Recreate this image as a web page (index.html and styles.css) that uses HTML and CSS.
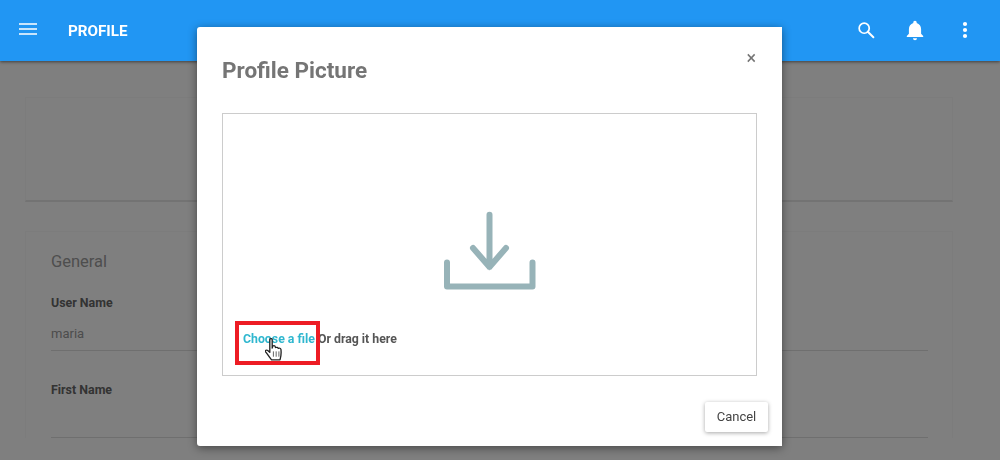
FILE: index.html
```html
<!DOCTYPE html>
<html lang="en">
<head>
    <meta charset="UTF-8">
    <title>Profile</title>
    <link rel="stylesheet" href="styles.css">
</head>
<body>
  <div class="header">
    <button class="icon-btn menu-btn" aria-label="Menu">
      <svg width="18" height="12" viewBox="0 0 18 12"><path d="M0 1h18M0 6h18M0 11h18" stroke="#fff" stroke-width="1.6"/></svg>
    </button>
    <h1 class="page-title">PROFILE</h1>
    <div class="header-actions">
      <svg class="icon" width="18" height="18" viewBox="0 0 20 20" aria-label="Search"><circle cx="8" cy="8" r="5.6" fill="none" stroke="#fff" stroke-width="1.9"/><path d="M12 12l6.2 6" stroke="#fff" stroke-width="2.2" stroke-linecap="round"/></svg>
      <svg class="icon" width="18" height="21" viewBox="0 0 18 21" aria-label="Notifications"><path d="M9 .8c1 0 1.7.8 1.7 1.8v.4c2.7.8 4.4 3.2 4.4 6.2v4.6L17.2 16v1H.8v-1l2.1-2.200V9.200c0-3 1.700-5.400 4.400-6.200v-.4C7.300 1.600 8 .8 9 .8z" fill="#fff"/><path d="M7 18.300h4c0 1.200-.9 2-2 2s-2-.8-2-2z" fill="#fff"/></svg>
      <svg class="icon more" width="6" height="18" viewBox="0 0 6 18" aria-label="More"><circle cx="3" cy="3" r="2.100" fill="#fff"/><circle cx="3" cy="9" r="2.100" fill="#fff"/><circle cx="3" cy="15" r="2.100" fill="#fff"/></svg>
    </div>
  </div>

  <div class="content">
    <div class="card top-card"></div>
    <div class="card">
      <h2 class="card-title">General</h2>
      <div class="field">
        <label>User Name</label>
        <div class="field-value">maria</div>
      </div>
      <div class="field">
        <label>First Name</label>
        <div class="field-value"></div>
      </div>
    </div>
  </div>

  <div class="backdrop"></div>

  <div class="dialog">
    <div class="dialog-head">
      <h3>Profile Picture</h3>
      <span class="close">&times;</span>
    </div>
    <div class="dropzone">
      <svg class="upload-icon" width="92" height="80" viewBox="0 0 92 80"><path d="M45.500 3.800V56M29 37l16.500 19L62 37M3 51.500V75.500h85.500V51.500" fill="none" stroke="#97b3b8" stroke-width="6" stroke-linecap="round" stroke-linejoin="round"/></svg>
      <p class="drop-text"><a class="file-link">Choose a file</a> Or drag it here</p>
      <div class="highlight"></div>
      <svg class="hand-cursor" width="18" height="23" viewBox="1 0.500 15 21.500" preserveAspectRatio="none"><path d="M5 2c0-1.300 2-1.300 2 0v8l.5-2c1-.6 2-.3 2 .8l.3.700c.9-.6 2-.3 2.200.8.900-.6 2.200-.2 2.300 1 .3 3 .2 6-.8 9.700H6.500C5 19 3 15.500 1.500 13.500c-.7-1.200.8-2.300 1.800-1.300L5 14V2z" fill="#fff" stroke="#222" stroke-width="1.100" stroke-linejoin="round"/><path d="M8 13v5M10.300 13v5M12.600 13v5" stroke="#555" stroke-width=".8"/></svg>
    </div>
    <div class="dialog-foot">
      <button class="cancel-btn">Cancel</button>
    </div>
  </div>
</body>
</html>
```

FILE: styles.css
```css
body {
  margin: 0;
  height: 460px;
  overflow: hidden;
  font-family: Roboto, sans-serif;
  background-color: #fff;
}

.header {
  position: relative;
  z-index: 2;
  display: flex;
  align-items: center;
  height: 61px;
  padding: 0 32px 0 19px;
  background-color: #2196f3;
  box-shadow: 0 1px 3px rgba(0, 0, 0, 0.5);
  color: #fff;
}

.icon-btn {
  display: flex;
  padding: 0;
  border: none;
  background: none;
  margin-top: -4px;
}

.page-title {
  margin: 0 0 0 31px;
  font-size: 15.2px;
  font-weight: 700;
}

.header-actions {
  display: flex;
  align-items: center;
  gap: 31px;
  margin-left: auto;
  margin-top: -1px;
}

.more {
  margin-left: 7px;
}

.content {
  padding: 36px 47px 0 25px;
}

.card {
  padding: 18px 24px 0 25px;
  border: 1px solid #f8f8f8;
  border-bottom: none;
}

.top-card {
  height: 102px;
  margin-bottom: 29px;
  padding: 0;
  border-bottom: 2px solid #e6e6e6;
}

.card-title {
  margin: 0;
  font-size: 16.500px;
  font-weight: 400;
  color: #9c9c9c;
  line-height: 24px;
}

.field {
  margin-top: 31px;
  border-bottom: 1px solid #dedede;
}

.card-title + .field {
  margin-top: 21px;
}

.field label {
  display: block;
  font-size: 12.400px;
  font-weight: 700;
  line-height: 16px;
  color: #666;
}

.field-value {
  height: 39px;
  padding-top: 15px;
  box-sizing: border-box;
  font-size: 13px;
  line-height: 16px;
  color: #999;
}

.backdrop {
  position: fixed;
  inset: 0;
  z-index: 1;
  background-color: rgba(0, 0, 0, 0.5);
}

.dialog {
  position: absolute;
  z-index: 3;
  top: 27px;
  left: 197px;
  width: 585px;
  height: 419px;
  box-sizing: border-box;
  padding: 0 14px 0 25px;
  background-color: #fff;
  border-radius: 3px 0 0 3px;
  box-shadow: 0 2px 10px rgba(0, 0, 0, 0.45);
}

.dialog-head {
  display: flex;
  justify-content: space-between;
  height: 86px;
}

.dialog-head h3 {
  margin: 29px 0 0;
  font-size: 22.500px;
  line-height: 28px;
  font-weight: 700;
  color: #757575;
}

.close {
  margin: 20px 12px 0 0;
  font-size: 18px;
  line-height: 22px;
  color: #757575;
}

.dropzone {
  position: relative;
  display: flex;
  flex-direction: column;
  align-items: center;
  width: 535px;
  height: 263px;
  box-sizing: border-box;
  padding-top: 97px;
  border: 1px solid #ccc;
}

.drop-text {
  align-self: flex-start;
  margin: 40px 0 0 20px;
  font-size: 12.300px;
  line-height: 16px;
  font-weight: 700;
  color: #555;
}

.file-link {
  color: #2fb7cf;
}

.highlight {
  position: absolute;
  left: 12px;
  top: 207px;
  width: 85px;
  height: 44px;
  box-sizing: border-box;
  border: 4px solid #ed1c24;
}

.hand-cursor {
  position: absolute;
  left: 42px;
  top: 224px;
}

.dialog-foot {
  display: flex;
  justify-content: flex-end;
  padding-top: 26px;
}

.cancel-btn {
  width: 63px;
  height: 30px;
  padding: 0 0 1px;
  border: none;
  border-radius: 2px;
  background-color: #fff;
  box-shadow: 0 1px 4px rgba(0, 0, 0, 0.35);
  font-family: Roboto, sans-serif;
  font-size: 13px;
  color: #444;
}
```
